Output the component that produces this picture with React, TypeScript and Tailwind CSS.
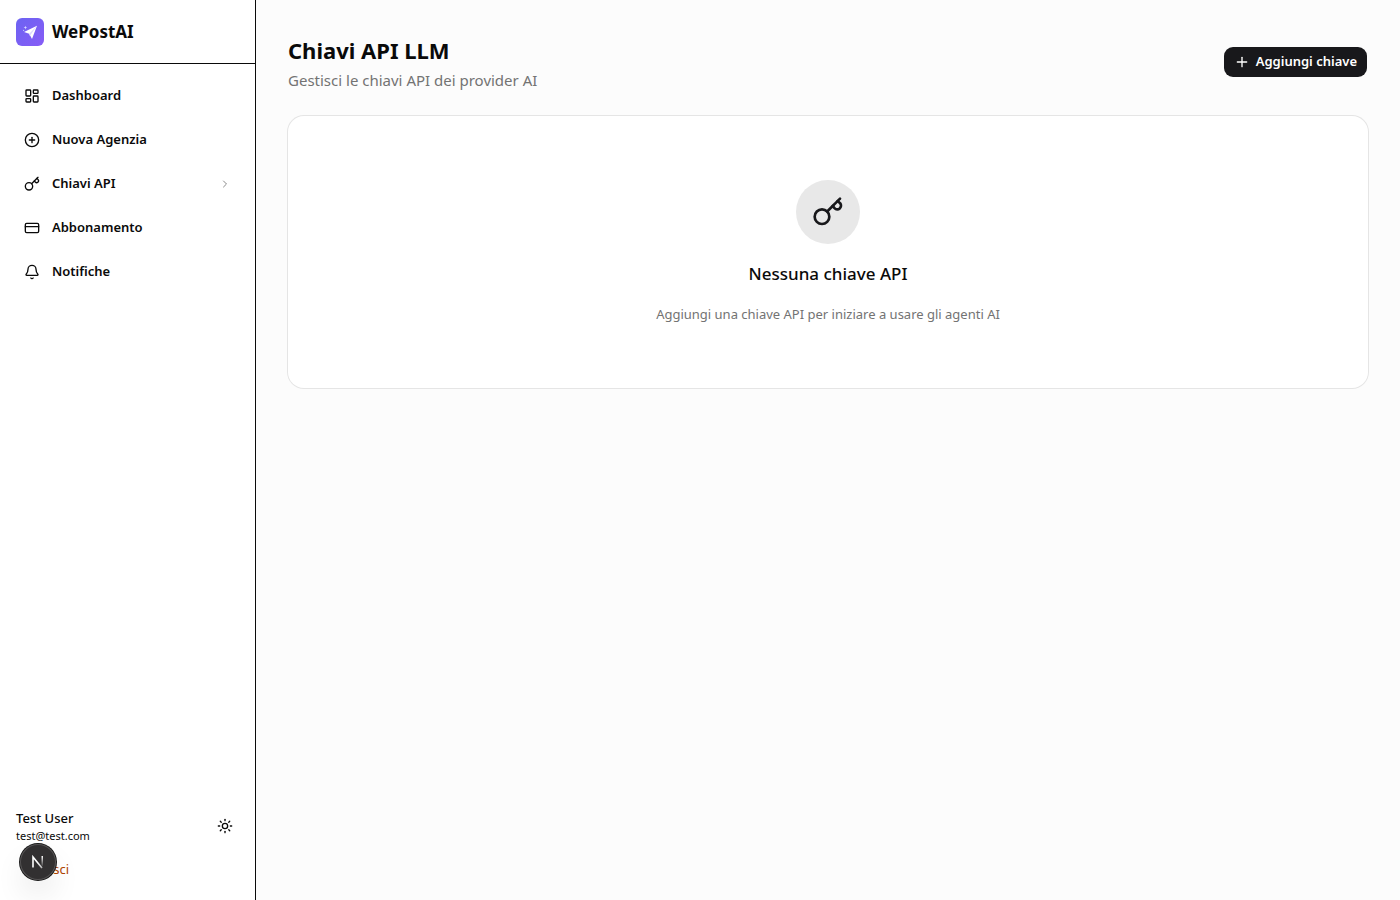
import type { ReactNode } from "react";
import { Bell, ChevronRight, CirclePlus, CreditCard, LayoutDashboard, LogOut, Plus, Sun } from "lucide-react";

function Logo() {
  return (
    <svg className="size-7 shrink-0" viewBox="0 0 28 28" aria-hidden="true">
      <defs>
        <linearGradient id="logo-fill" x1="0" y1="0" x2="1" y2="1">
          <stop offset="0" stopColor="#6c63f2" />
          <stop offset="1" stopColor="#875cf6" />
        </linearGradient>
      </defs>
      <rect width="28" height="28" rx="6" fill="url(#logo-fill)" />
      <path d="M21 7.8 8 13.9l5.2 1.9 2.8 5.2z" fill="#fff" />
      <path d="M21 7.8 13.2 15.8l.3 2 1.2-1z" fill="#ddd6fe" />
      <path d="m9.4 7.8.5 1.3 1.3.5-1.3.5-.5 1.3-.5-1.3-1.3-.5 1.3-.5z" fill="#d5d6ff" />
      <circle cx="7.6" cy="12.3" r=".6" fill="#c7d2fe" />
    </svg>
  );
}

function KeyIcon({ size }: { size: number }) {
  return (
    <svg
      width={size}
      height={size}
      viewBox="0 0 24 24"
      fill="none"
      stroke="currentColor"
      strokeWidth="2"
      strokeLinecap="round"
      strokeLinejoin="round"
      aria-hidden="true"
    >
      <circle cx="7.5" cy="15.5" r="5.5" />
      <path d="m21 2-9.6 9.6" />
      <path d="m15.5 7.5 1.4 1.6a2.8 2.8 0 0 0 4.2-3.7L19.2 3.8" />
    </svg>
  );
}

function NavItem({ icon, label, trailing }: { icon: ReactNode; label: string; trailing?: ReactNode }) {
  return (
    <li>
      <a href="#" className="flex h-10 items-center gap-3 rounded-lg px-3 text-[13px] font-semibold">
        {icon}
        <span className="flex-1">{label}</span>
        {trailing}
      </a>
    </li>
  );
}

function Sidebar() {
  return (
    <aside className="flex w-64 shrink-0 flex-col border-r border-[#0a0a0a] bg-white">
      <div className="flex h-16 items-center gap-2 border-b border-[#0a0a0a] px-4">
        <Logo />
        <span className="text-[17px] font-bold">WePostAI</span>
      </div>
      <nav className="flex-1 p-3" aria-label="Principale">
        <ul className="flex flex-col gap-1">
          <NavItem icon={<LayoutDashboard size={16} />} label="Dashboard" />
          <NavItem icon={<CirclePlus size={16} />} label="Nuova Agenzia" />
          <NavItem
            icon={<KeyIcon size={16} />}
            label="Chiavi API"
            trailing={<ChevronRight size={12} className="text-[#8a8a8a]" />}
          />
          <NavItem icon={<CreditCard size={16} />} label="Abbonamento" />
          <NavItem icon={<Bell size={16} />} label="Notifiche" />
        </ul>
      </nav>
      <div className="flex flex-col gap-3 p-4">
        <div className="flex items-center justify-between">
          <div>
            <p className="text-[13px] leading-5 font-medium">Test User</p>
            <p className="text-[11px] leading-4">test@test.com</p>
          </div>
          <button type="button" aria-label="Cambia tema" className="flex size-7 items-center justify-center rounded-lg">
            <Sun size={16} />
          </button>
        </div>
        <button type="button" className="flex h-7 items-center gap-1.5 rounded-lg px-2 text-[13px] text-[#b04400]">
          <LogOut size={16} />
          Esci
        </button>
      </div>
    </aside>
  );
}

function DevBadge() {
  return (
    <button
      type="button"
      aria-label="Next.js"
      className="fixed bottom-5 left-5 flex size-9 items-center justify-center rounded-full bg-[#323031] shadow-[0_0_0_1px_#171717,inset_0_0_0_1px_#555354,0_16px_32px_-8px_rgba(0,0,0,0.24)]"
    >
      <svg width="14" height="14" viewBox="0 0 14 14" fill="none" aria-hidden="true">
        <defs>
          <linearGradient id="n-stem" x1="11" y1="1" x2="11" y2="12" gradientUnits="userSpaceOnUse">
            <stop stopColor="#fff" />
            <stop offset="1" stopColor="#fff" stopOpacity="0" />
          </linearGradient>
          <linearGradient id="n-slash" x1="7" y1="7" x2="12" y2="13" gradientUnits="userSpaceOnUse">
            <stop stopColor="#fff" />
            <stop offset="1" stopColor="#fff" stopOpacity="0.6" />
          </linearGradient>
        </defs>
        <path d="M2 12.5V2l9 11" stroke="url(#n-slash)" strokeWidth="1.6" />
        <rect x="10.5" y="1" width="1.5" height="10" fill="url(#n-stem)" />
      </svg>
    </button>
  );
}

export default function App() {
  return (
    <div className="flex min-h-screen bg-[#fcfcfc] font-['Noto_Sans',sans-serif] text-[#0a0a0a]">
      <Sidebar />
      <main className="flex flex-1 flex-col gap-6 p-8">
        <header className="flex items-center justify-between">
          <div>
            <h1 className="text-[22px] leading-9 font-bold">Chiavi API LLM</h1>
            <p className="text-[15px] leading-6 text-[#737373]">Gestisci le chiavi API dei provider AI</p>
          </div>
          <button
            type="button"
            className="flex h-8 items-center gap-1.5 rounded-[10px] border border-transparent bg-[#18181b] bg-clip-padding px-2.5 text-[13px] font-semibold text-white"
          >
            <Plus size={16} />
            Aggiungi chiave
          </button>
        </header>
        <section className="flex flex-col items-center rounded-2xl bg-white px-4 py-16 text-center ring-1 ring-[#e5e5e5]">
          <div className="mb-4 flex size-16 items-center justify-center rounded-full bg-[#e8e8e8] text-[#18181b]">
            <KeyIcon size={32} />
          </div>
          <h2 className="mb-4 text-[17px] leading-7 font-medium">Nessuna chiave API</h2>
          <p className="text-[13px] leading-5 text-[#737373]">
            Aggiungi una chiave API per iniziare a usare gli agenti AI
          </p>
        </section>
      </main>
      <DevBadge />
    </div>
  );
}
